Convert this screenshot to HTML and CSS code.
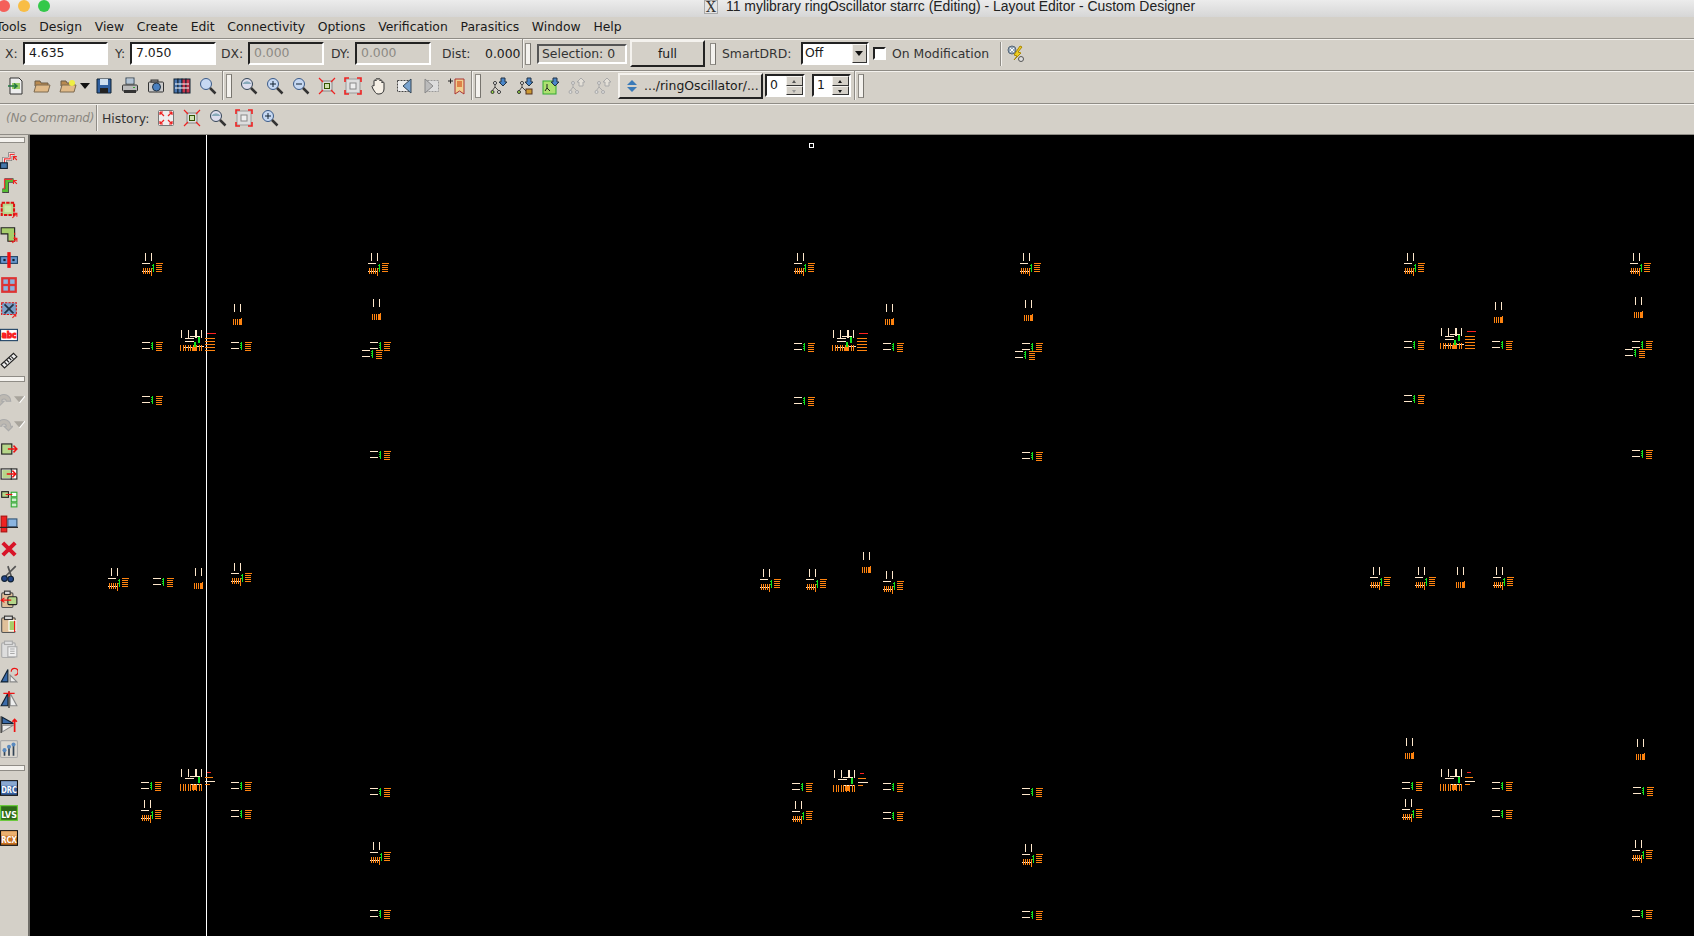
FILE: index.html
```html
<!DOCTYPE html>
<html lang="en">
<head>
<meta charset="utf-8">
<title>11 mylibrary ringOscillator starrc (Editing) - Layout Editor - Custom Designer</title>
<link rel="stylesheet" href="styles.css">
</head>
<body>
<svg class="defs" width="0" height="0" aria-hidden="true">
<defs>
<symbol id="i-open" viewBox="0 0 18 18"><path d="M3 1h9l3 3v13H3z" fill="#eee" stroke="#333"/><rect x="5" y="6" width="8" height="6" fill="#9c6"/><path d="M1 9h8M7 6.500 10 9l-3 2.500" stroke="#274" stroke-width="1.500" fill="none"/></symbol>
<symbol id="i-folder" viewBox="0 0 18 18"><path d="M2 4h5l1 2h7v3H2z" fill="#b98a50" stroke="#6b5a45"/><path d="M1 15 3 8h14l-2 7z" fill="#e0ba88" stroke="#7d6a50"/></symbol>
<symbol id="i-folder2" viewBox="0 0 18 18"><path d="M2 4h5l1 2h7v3H2z" fill="#b98a50" stroke="#6b5a45"/><path d="M1 15 3 8h14l-2 7z" fill="#e0ba88" stroke="#7d6a50"/><circle cx="13" cy="6" r="3" fill="#ee4"/></symbol>
<symbol id="i-save" viewBox="0 0 18 18"><path d="M2 2h14v14H2z" fill="#2f5f9f" stroke="#123"/><rect x="5" y="2" width="8" height="6" fill="#cfe0f0"/><rect x="5" y="11" width="8" height="5" fill="#222"/></symbol>
<symbol id="i-print" viewBox="0 0 18 18"><rect x="5" y="1" width="8" height="6" fill="#fff" stroke="#345"/><path d="M5 3h8M5 5h8" stroke="#68a"/><rect x="1.500" y="8" width="15" height="6" rx="1" fill="#bbb" stroke="#333"/><rect x="3" y="13" width="12" height="3" fill="#333"/><rect x="12" y="10" width="2" height="1" fill="#3a3"/></symbol>
<symbol id="i-cam" viewBox="0 0 18 18"><rect x="1.500" y="5" width="15" height="10" rx="1" fill="#ccc" stroke="#333"/><rect x="4" y="3" width="7" height="2" fill="#999" stroke="#333"/><circle cx="9.500" cy="10" r="4" fill="#4a80c0" stroke="#234"/></symbol>
<symbol id="i-lib" viewBox="0 0 18 18"><rect x="1" y="2" width="4" height="14" fill="#4a76b0" stroke="#123"/><rect x="5" y="2" width="4" height="14" fill="#4a76b0" stroke="#123"/><rect x="9" y="2" width="4" height="14" fill="#c8344a" stroke="#123"/><rect x="13" y="2" width="4" height="14" fill="#c8344a" stroke="#123"/><path d="M2 7h14M2 11h14" stroke="#fff"/></symbol>
<symbol id="i-mag" viewBox="0 0 18 18"><circle cx="7" cy="7" r="5.500" fill="#c6d8f2" stroke="#3a5a88"/><path d="M11 11l5.500 5.500" stroke="#333" stroke-width="2.500"/></symbol>
<symbol id="i-magfit" viewBox="0 0 18 18"><circle cx="7" cy="7" r="5.500" fill="#dde" stroke="#345"/><path d="M2.500 7a5 5 0 0 1 9 0z" fill="#8ab"/><path d="M11 11l5.500 5.500" stroke="#333" stroke-width="2.500"/></symbol>
<symbol id="i-plus" viewBox="0 0 18 18"><circle cx="7" cy="7" r="5.500" fill="#c6d8f2" stroke="#3a5a88"/><path d="M4 7h6M7 4v6" stroke="#123"/><path d="M11 11l5.500 5.500" stroke="#333" stroke-width="2.500"/></symbol>
<symbol id="i-minus" viewBox="0 0 18 18"><circle cx="7" cy="7" r="5.500" fill="#c6d8f2" stroke="#3a5a88"/><path d="M4 7h6" stroke="#123"/><path d="M11 11l5.500 5.500" stroke="#333" stroke-width="2.500"/></symbol>
<symbol id="i-fit" viewBox="0 0 18 18"><rect x="4" y="4" width="10" height="10" fill="#ddd" stroke="#888"/><rect x="6.500" y="6.500" width="5" height="5" fill="#cfe0b0" stroke="#350"/><path d="M1 1l4 4M17 1l-4 4M1 17l4-4M17 17l-4-4" stroke="#e22" stroke-width="1.200"/></symbol>
<symbol id="i-fit2" viewBox="0 0 18 18"><rect x="2" y="2" width="14" height="14" fill="#ddd" stroke="#999"/><rect x="6" y="6" width="6" height="6" fill="#eee" stroke="#888"/><path d="M1 5V1h4M13 1h4v4M1 13v4h4M17 13v4h-4" stroke="#e22" stroke-width="1.600" fill="none"/></symbol>
<symbol id="i-fit3" viewBox="0 0 18 18"><rect x="1.500" y="1.500" width="15" height="15" rx="1" fill="#eee" stroke="#777"/><path d="M3 3l4 4M3 3v3M3 3h3M15 3l-4 4M15 3v3M15 3h-3M3 15l4-4M3 15v-3M3 15h3M15 15l-4-4M15 15v-3M15 15h-3" stroke="#e22" stroke-width="1.200" fill="none"/></symbol>
<symbol id="i-hand" viewBox="0 0 18 18"><path d="M4 9V4a1 1 0 0 1 2 0V2.500a1 1 0 0 1 2 0a1 1 0 0 1 2 0V4a1 1 0 0 1 2 0v2a1 1 0 0 1 2 0v6c0 3-2 5-5 5H8c-2 0-3-2-5-5L2 9.500c0-1 1.500-1 2-.500z" fill="#f6f0e6" stroke="#333"/></symbol>
<symbol id="i-prev" viewBox="0 0 18 18"><rect x="1.500" y="3.500" width="11" height="11" fill="#eee" stroke="#444" stroke-dasharray="2 1"/><path d="M15 2v14L7 9z" fill="#7aa4d0" stroke="#345"/></symbol>
<symbol id="i-next" viewBox="0 0 18 18"><rect x="5.500" y="3.500" width="11" height="11" fill="#ddd" stroke="#999" stroke-dasharray="2 1"/><path d="M3 2v14l8-7z" fill="#bbb" stroke="#888"/></symbol>
<symbol id="i-book" viewBox="0 0 18 18"><path d="M0 4h5M2.500 1.500v5" stroke="#222"/><path d="M7 2h9v15l-4.500-3L7 17z" fill="#f0d090" stroke="#a33"/><path d="M9 5h5M9 7h5M9 9h5" stroke="#c30"/></symbol>
<symbol id="i-h1" viewBox="0 0 18 18"><path d="M5 6v4M2 14l3-4 4 4" stroke="#444" fill="none"/><circle cx="5" cy="6" r="1.500" fill="#fff" stroke="#333"/><circle cx="2.500" cy="15" r="1.500" fill="#9d4" stroke="#333"/><circle cx="9" cy="15" r="1.500" fill="#fff" stroke="#333"/><path d="M11 1h4v4h2l-4 4-4-4h2z" fill="#4a86c8" stroke="#234"/></symbol>
<symbol id="i-h2" viewBox="0 0 18 18"><path d="M6 6v4M3 14l3-4 4 4" stroke="#444" fill="none"/><circle cx="6" cy="6" r="1.500" fill="#fff" stroke="#333"/><circle cx="3" cy="15" r="1.500" fill="#9d4" stroke="#333"/><rect x="10" y="12" width="6" height="5" fill="#c93" stroke="#532"/><path d="M11 1h4v4h2l-4 4-4-4h2z" fill="#4a86c8" stroke="#234"/></symbol>
<symbol id="i-h3" viewBox="0 0 18 18"><rect x="1" y="4" width="13" height="13" fill="#ade070" stroke="#3a3"/><path d="M5 7v4M3 14l2-3 3 3" stroke="#222" fill="none"/><path d="M11 1h4v4h2l-4 4-4-4h2z" fill="#4a86c8" stroke="#234"/></symbol>
<symbol id="i-up" viewBox="0 0 18 18"><path d="M5 6v4M2 14l3-4 4 4" stroke="#aaa" fill="none"/><circle cx="5" cy="6" r="1.500" fill="#ddd" stroke="#aaa"/><circle cx="2.500" cy="15" r="1.500" fill="#ddd" stroke="#aaa"/><circle cx="9" cy="15" r="1.500" fill="#ddd" stroke="#aaa"/><path d="M11 9V5H9l4-4 4 4h-2v4z" fill="#e4e0d8" stroke="#aaa"/></symbol>
<symbol id="i-wand" viewBox="0 0 18 18"><circle cx="5" cy="5" r="4" fill="#9ab" stroke="#567"/><path d="M3 3l4 4M7 3l-4 4" stroke="#fff"/><path d="M13 1l-6 9 3 1-3 4 7-7-3-1 4-5z" fill="#ec2" stroke="#a80"/><circle cx="14" cy="14" r="2.500" fill="#ddd" stroke="#555"/></symbol>
<symbol id="s-p1" viewBox="0 0 16 16"><path d="M4 14V7h5V3h4" fill="none" stroke="#555" stroke-width="3.500"/><path d="M4 14V7h5V3h4" fill="none" stroke="#fff" stroke-width="2.500"/><path d="M4 14V7h5V3h4" fill="none" stroke="#e33"/><rect x="0.500" y="10.500" width="6" height="5" fill="#47a" stroke="#123"/><path d="M12 5l3 3M12 8V5h3" stroke="#e22" fill="none"/></symbol>
<symbol id="s-p2" viewBox="0 0 16 16"><path d="M2 13h4V4h6" fill="none" stroke="#444" stroke-width="4"/><path d="M2 13h4V4h6" fill="none" stroke="#5b3" stroke-width="2.500"/><path d="M3 11h1V3h7" fill="none" stroke="#e33"/><path d="M12 4l3 3M12 7V4h3" stroke="#e22" fill="none"/></symbol>
<symbol id="s-rect" viewBox="0 0 16 16"><rect x="1.500" y="1.500" width="11" height="11" fill="#b6d68a" stroke="#d11" stroke-width="1.800" stroke-dasharray="3 1"/><rect x="4" y="4" width="6" height="6" fill="#cde6a8"/><path d="M11 15l4-4M12 11h3v3" stroke="#e22" fill="none"/></symbol>
<symbol id="s-poly" viewBox="0 0 16 16"><path d="M1 1.500h12v12H7V7H1z" fill="#a6ce6a" stroke="#222"/><path d="M13 6v7.500H8" fill="none" stroke="#d11" stroke-dasharray="2 1"/><path d="M11 15l4-4M12 11h3v3" stroke="#e22" fill="none"/></symbol>
<symbol id="s-via" viewBox="0 0 16 16"><rect x="0.500" y="5" width="15" height="6" fill="#6a9ad0" stroke="#246"/><rect x="3" y="7" width="2" height="2" fill="#123"/><rect x="11" y="7" width="2" height="2" fill="#123"/><rect x="6.500" y="1" width="3" height="14" fill="#e11"/></symbol>
<symbol id="s-grid" viewBox="0 0 16 16"><rect x="1" y="1" width="14" height="14" fill="#d33"/><rect x="3" y="3" width="4" height="4" fill="#8ab4e0"/><rect x="9" y="3" width="4" height="4" fill="#8ab4e0"/><rect x="3" y="9" width="4" height="4" fill="#8ab4e0"/><rect x="9" y="9" width="4" height="4" fill="#8ab4e0"/></symbol>
<symbol id="s-x" viewBox="0 0 16 16"><rect x="1.500" y="1.500" width="13" height="10.500" fill="#7aa0c8" stroke="#d11" stroke-dasharray="2 1"/><path d="M4 3l8 8M12 3l-8 8" stroke="#234" stroke-width="1.500"/><path d="M11 15l3-3M12 12h2v2" stroke="#e22" fill="none"/></symbol>
<symbol id="s-abc" viewBox="0 0 16 16"><rect x="0.500" y="3" width="15" height="10" fill="#fff" stroke="#246"/><text x="8" y="11" text-anchor="middle" textLength="13" lengthAdjust="spacingAndGlyphs" class="icon-text red">abc</text></symbol>
<symbol id="s-rule" viewBox="0 0 16 16"><path d="M1 12 12 2l3 3L4 15z" fill="#eee" stroke="#222"/><path d="M4 10l2 2M6 8l2 2M8 6l2 2M10 5l2 2" stroke="#222"/></symbol>
<symbol id="s-undo" viewBox="0 0 16 16"><path d="M2 10a6 6 0 0 1 12 0h-4a2 2 0 0 0-4 0h2l-4 4-4-4z" fill="#bdb9b2" stroke="#aaa"/></symbol>
<symbol id="s-redo" viewBox="0 0 16 16"><path d="M14 10a6 6 0 0 0-12 0h4a2 2 0 0 1 4 0H8l4 4 4-4z" fill="#bdb9b2" stroke="#aaa"/></symbol>
<symbol id="s-down" viewBox="0 0 10 10"><path d="M0 2h10L5 8z" fill="#a8a49c"/><path d="M10 2 5 8" stroke="#fff"/></symbol>
<symbol id="s-mv1" viewBox="0 0 16 16"><rect x="1.500" y="3.500" width="9" height="9" fill="#b6d68a" stroke="#222"/><path d="M7 8h8M12 5l3 3-3 3" stroke="#e11" fill="none" stroke-width="1.300"/></symbol>
<symbol id="s-mv2" viewBox="0 0 16 16"><rect x="1" y="3.500" width="14" height="9" fill="#fff" stroke="#222"/><rect x="2" y="4.500" width="7" height="7" fill="#b6d68a"/><path d="M10 3v10" stroke="#222"/><path d="M6 8h8M11 5l3 3-3 3" stroke="#e11" fill="none" stroke-width="1.300"/></symbol>
<symbol id="s-mv3" viewBox="0 0 16 16"><rect x="1.500" y="1.500" width="6" height="5" fill="#b6d68a" stroke="#222"/><rect x="10" y="2" width="5" height="4" fill="#fff" stroke="#3a3"/><rect x="10" y="7" width="5" height="3.500" fill="#cec" stroke="#3a3"/><rect x="10" y="11.500" width="5" height="3.500" fill="#cec" stroke="#3a3"/><path d="M5 4h6" stroke="#e11"/></symbol>
<symbol id="s-align" viewBox="0 0 16 16"><rect x="1" y="1" width="5" height="14" fill="#e22" stroke="#a11"/><rect x="7" y="3.500" width="8" height="7" fill="#8ab4e0" stroke="#357"/><path d="M0 11h16" stroke="#222"/></symbol>
<symbol id="s-del" viewBox="0 0 16 16"><path d="M2.500 2.500l11 11M13.500 2.500l-11 11" stroke="#d81428" stroke-width="3.500"/></symbol>
<symbol id="s-cut" viewBox="0 0 16 16"><path d="M5 10 14 1M10 10 7 1" stroke="#555" stroke-width="1.500"/><circle cx="4" cy="12" r="2.500" fill="#248" stroke="#123"/><circle cx="9.500" cy="12.500" r="2.500" fill="#248" stroke="#123"/></symbol>
<symbol id="s-c1" viewBox="0 0 16 16"><rect x="1.500" y="2.500" width="10" height="13" rx="1" fill="#e0c09a" stroke="#555"/><rect x="4" y="1" width="5" height="3" fill="#ddd" stroke="#333"/><rect x="7" y="6" width="8" height="7" rx="1" fill="#b6d68a" stroke="#222"/><path d="M1 9h9M4 7 1 9l3 2" stroke="#e11" fill="none"/></symbol>
<symbol id="s-c2" viewBox="0 0 16 16"><rect x="1.500" y="2.500" width="12" height="13" rx="1" fill="#e0c09a" stroke="#555"/><rect x="4" y="1" width="7" height="3" fill="#ddd" stroke="#333"/><rect x="8" y="5" width="6" height="9" fill="#a6ce6a" stroke="#fff"/><path d="M13 5v10" stroke="#e11"/></symbol>
<symbol id="s-c3" viewBox="0 0 16 16"><rect x="1.500" y="2.500" width="12" height="13" rx="1" fill="#ddd" stroke="#aaa"/><rect x="4" y="1" width="7" height="3" fill="#ddd" stroke="#aaa"/><rect x="7" y="6" width="8" height="9" fill="#eee" stroke="#aaa"/><path d="M9 8h4M9 10h4M9 12h4" stroke="#aaa"/></symbol>
<symbol id="s-t1" viewBox="0 0 16 16"><path d="M7 4v11H1z" fill="#3a6aa8" stroke="#123"/><path d="M9 9v6h6z" fill="#eee" stroke="#888"/><path d="M10 6a3 3 0 1 1 3 3" fill="none" stroke="#e11"/></symbol>
<symbol id="s-t2" viewBox="0 0 16 16"><path d="M7 3v11H1z" fill="#3a6aa8" stroke="#123"/><path d="M9 3v11h6z" fill="#eee" stroke="#888"/><path d="M8 1v15" stroke="#222"/><path d="M3 3h10M8 1v5" stroke="#e11" stroke-width="1.300"/></symbol>
<symbol id="s-t3" viewBox="0 0 16 16"><path d="M2 2l10 5.500H2z" fill="#3a6aa8" stroke="#123"/><path d="M2 9h10L2 15z" fill="#eee" stroke="#888"/><path d="M1 1v15" stroke="#222"/><path d="M13 15V4M11 6l2-2 2 2" stroke="#e11" stroke-width="1.500" fill="none"/></symbol>
<symbol id="s-sl" viewBox="0 0 16 16"><rect x="0.500" y="0.500" width="15" height="15" rx="1" fill="#dcd8d0" stroke="#aaa"/><path d="M4 14V8M8 14V5M12 14V3" stroke="#345" stroke-width="1.500"/><circle cx="4" cy="9" r="1.800" fill="#5a8ac0"/><circle cx="8" cy="6" r="1.800" fill="#5a8ac0"/><circle cx="12" cy="4" r="1.800" fill="#5a8ac0"/></symbol>
<symbol id="s-drc" viewBox="0 0 16 14"><rect x="0.500" y="0.500" width="15" height="13" fill="#3a62a0" stroke="#111"/><rect x="1" y="1" width="14" height="4" fill="#8aa8d0"/><text x="8" y="11" text-anchor="middle" textLength="14" lengthAdjust="spacingAndGlyphs" class="icon-text">DRC</text></symbol>
<symbol id="s-lvs" viewBox="0 0 16 14"><rect x="0.500" y="0.500" width="15" height="13" fill="#2e6a18" stroke="#6c3"/><text x="8" y="11" text-anchor="middle" textLength="14" lengthAdjust="spacingAndGlyphs" class="icon-text">LVS</text></symbol>
<symbol id="s-rcx" viewBox="0 0 16 14"><rect x="0.500" y="0.500" width="15" height="13" fill="#c87020" stroke="#111"/><rect x="1" y="1" width="14" height="4" fill="#eab070"/><text x="8" y="11" text-anchor="middle" textLength="14" lengthAdjust="spacingAndGlyphs" class="icon-text">RCX</text></symbol>

<g id="m-a">
<path class="cream" d="M-6.500-10.500v8M-.5-10.500v8M-10.500 .5h8M-10.500 8h9"/>
<path class="green" d="M1 .5v8M0 2.500h2M-1 5h3"/>
<path class="orange" d="M-8.500 4.500v6M-6.500 4.500v6M-4.500 4.500v6M-2.500 4.500v6M-.5 4.500v8M3.500 .5h7M3.500 2.500h6M3.500 4.500h6M3.500 6.500h6M3.500 8.500h6"/>
</g>
<g id="m-b">
<path class="cream" d="M-10.500-3.500h8M-10.500 2.500h8"/>
<path class="green" d="M.5-4.500v8M-1-2.500h1.500M-1-.5h1.500M-1 1.500h1.500"/>
<path class="orange" d="M3.500-3.500h7M3.500-1.500h6M3.500 .5h6M3.500 2.500h6M3.500 4.500h6"/>
</g>
<g id="m-c">
<path class="cream" d="M-2.500-10.500v8M3.500-10.500v8"/>
<path class="orange" d="M-3.500 4.500v6M-1.500 4.500v6M.5 4.500v6M2.500 4.500v6M4.500 3.500v7M3.500 4.500v6"/>
</g>
<g id="m-d">
<path class="cream" d="M-16.500-12v8M-9.500-12v8M-2.500-12v8M-1.500-12v8M3.500-12v8M-13-3.500h9M-8-5.500h10M-13-.5h9M-14 5.500h9M-1 4.500h7M7 -.5h10"/>
<path class="green thick" d="M1-5v6M-3 0v7"/>
<path class="orange" d="M-17.500 3v6M-15 3v6M-12.500 3v6M-10 3v6M-8 3v6M-5 3v6M-2 3v6M1 3v6M3.500 3v6M7-3.500h10M7-.5h10M7 2.500h10M7 5.500h10M7 8.500h10"/>
<rect class="fill-o" x="-6" y="5" width="4" height="4"/>
<path class="red" d="M9-9h9"/>
</g>
<g id="m-e">
<path class="cream" d="M-16.500-12v8M-9.500-12v8M-2.500-12v8M-1.500-12v8M3.500-12v8M-13-2.500h9M-8-4.500h10M-7 3.500h10M7 .5h10"/>
<path class="green thick" d="M1-4v6"/>
<path class="orange" d="M-17.500 3v7M-15 3v7M-12.500 3v7M-10 3v7M-8 3v7M-5 3v7M-2 3v7M1 3v7M3.500 3v7M7-3.500h8M7 3.500h5"/>
<rect class="fill-o" x="-6" y="4" width="4" height="5"/>
<path class="red" d="M9-9h4"/>
</g>
</defs>
</svg>

<div class="app">
  <header class="title">
    <div class="lights"><i class="dot red-dot"></i><i class="dot yellow-dot"></i><i class="dot green-dot"></i></div>
    <div class="title-text"><span class="x-box">X</span>11 mylibrary ringOscillator starrc (Editing) - Layout Editor - Custom Designer</div>
  </header>
  <nav class="menu">
    <span class="cut">Tools</span><span>Design</span><span>View</span><span>Create</span><span>Edit</span><span>Connectivity</span><span>Options</span><span>Verification</span><span>Parasitics</span><span>Window</span><span>Help</span>
  </nav>

  <div class="bar bar1">
    <label class="lab l-x">X:</label><div class="field w85">4.635</div>
    <label class="lab l-y">Y:</label><div class="field w86">7.050</div>
    <label class="lab l-dx">DX:</label><div class="field w76 off">0.000</div>
    <label class="lab l-dy">DY:</label><div class="field w76 off">0.000</div>
    <label class="lab l-dist">Dist:</label><span class="num">0.000</span>
    <div class="sep s1"></div><div class="grip"></div>
    <div class="selbox">Selection: 0</div>
    <button class="btn full">full</button>
    <div class="grip g2"></div>
    <label class="lab l-sd">SmartDRD:</label>
    <div class="combo"><span>Off</span><b class="arrow"></b></div>
    <div class="check"></div><label class="lab l-on">On Modification</label>
    <div class="sep s2"></div>
    <svg class="ic wand"><use href="#i-wand"/></svg>
  </div>

  <div class="bar bar2">
    <svg class="ic first"><use href="#i-open"/></svg>
    <svg class="ic"><use href="#i-folder"/></svg>
    <svg class="ic"><use href="#i-folder2"/></svg><b class="drop"></b>
    <svg class="ic t1"><use href="#i-save"/></svg>
    <svg class="ic"><use href="#i-print"/></svg>
    <svg class="ic"><use href="#i-cam"/></svg>
    <svg class="ic"><use href="#i-lib"/></svg>
    <svg class="ic"><use href="#i-mag"/></svg>
    <div class="sep s3"></div><div class="grip"></div>
    <svg class="ic t2"><use href="#i-magfit"/></svg>
    <svg class="ic"><use href="#i-plus"/></svg>
    <svg class="ic"><use href="#i-minus"/></svg>
    <svg class="ic"><use href="#i-fit"/></svg>
    <svg class="ic"><use href="#i-fit2"/></svg>
    <svg class="ic"><use href="#i-hand"/></svg>
    <svg class="ic"><use href="#i-prev"/></svg>
    <svg class="ic"><use href="#i-next"/></svg>
    <svg class="ic"><use href="#i-book"/></svg>
    <div class="sep s3"></div><div class="grip"></div>
    <svg class="ic t3"><use href="#i-h1"/></svg>
    <svg class="ic"><use href="#i-h2"/></svg>
    <svg class="ic"><use href="#i-h3"/></svg>
    <svg class="ic"><use href="#i-up"/></svg>
    <svg class="ic"><use href="#i-up"/></svg>
    <button class="btn path"><span class="updown"><i></i><i></i></span>.../ringOscillator/...</button>
    <div class="spin"><span>0</span><div class="spin-b"><i class="u dim"></i><i class="d dim"></i></div></div>
    <div class="spin s2nd"><span>1</span><div class="spin-b"><i class="u"></i><i class="d"></i></div></div>
    <div class="sep s5"></div><div class="grip"></div>
  </div>

  <div class="bar bar3">
    <span class="cmd">(No Command)</span>
    <div class="sep s4"></div>
    <label class="lab hist">History:</label>
    <svg class="ic h1"><use href="#i-fit3"/></svg>
    <svg class="ic"><use href="#i-fit"/></svg>
    <svg class="ic"><use href="#i-magfit"/></svg>
    <svg class="ic"><use href="#i-fit2"/></svg>
    <svg class="ic"><use href="#i-plus"/></svg>
  </div>

  <main class="work">
    <aside class="side">
      <div class="grip-h"></div>
      <div class="tools">
        <svg class="st"><use href="#s-p1"/></svg>
        <svg class="st"><use href="#s-p2"/></svg>
        <svg class="st"><use href="#s-rect"/></svg>
        <svg class="st"><use href="#s-poly"/></svg>
        <svg class="st"><use href="#s-via"/></svg>
        <svg class="st"><use href="#s-grid"/></svg>
        <svg class="st"><use href="#s-x"/></svg>
        <svg class="st"><use href="#s-abc"/></svg>
        <svg class="st"><use href="#s-rule"/></svg>
      </div>
      <div class="grip-h"></div>
      <div class="tools">
        <div class="st-row"><svg class="st"><use href="#s-undo"/></svg><svg class="mini"><use href="#s-down"/></svg></div>
        <div class="st-row"><svg class="st"><use href="#s-redo"/></svg><svg class="mini"><use href="#s-down"/></svg></div>
        <svg class="st"><use href="#s-mv1"/></svg>
        <svg class="st"><use href="#s-mv2"/></svg>
        <svg class="st"><use href="#s-mv3"/></svg>
        <svg class="st"><use href="#s-align"/></svg>
        <svg class="st"><use href="#s-del"/></svg>
        <svg class="st"><use href="#s-cut"/></svg>
        <svg class="st"><use href="#s-c1"/></svg>
        <svg class="st"><use href="#s-c2"/></svg>
        <svg class="st"><use href="#s-c3"/></svg>
        <svg class="st"><use href="#s-t1"/></svg>
        <svg class="st"><use href="#s-t2"/></svg>
        <svg class="st"><use href="#s-t3"/></svg>
        <svg class="st"><use href="#s-sl"/></svg>
      </div>
      <div class="grip-h"></div>
      <div class="tools">
        <svg class="st"><use href="#s-drc"/></svg>
        <svg class="st"><use href="#s-lvs"/></svg>
        <svg class="st"><use href="#s-rcx"/></svg>
      </div>
    </aside>
    <svg class="canvas" viewBox="30 135 1664 801" preserveAspectRatio="xMinYMin slice">
      <rect x="809.500" y="143.500" width="4" height="4" class="marker"/>
      <path class="crosshair" d="M206.500 135v801"/>
      <use href="#m-a" x="152" y="263"/><use href="#m-a" x="378" y="263"/>
      <use href="#m-c" x="237" y="314"/><use href="#m-c" x="376" y="309"/>
      <use href="#m-b" x="152" y="346"/><use href="#m-d" x="198" y="342"/><use href="#m-b" x="241" y="346"/><use href="#m-b" x="380" y="346"/><use href="#m-b" x="372" y="354"/>
      <use href="#m-b" x="152" y="400"/><use href="#m-b" x="380" y="455"/>
      <use href="#m-a" x="118" y="578"/><use href="#m-b" x="163" y="582"/><use href="#m-c" x="198" y="578"/><use href="#m-a" x="241" y="573"/>
      <use href="#m-b" x="151" y="786"/><use href="#m-e" x="198" y="781"/><use href="#m-b" x="241" y="786"/><use href="#m-b" x="380" y="792"/>
      <use href="#m-a" x="151" y="810"/><use href="#m-b" x="241" y="814"/>
      <use href="#m-a" x="380" y="852"/><use href="#m-b" x="380" y="914"/>

      <use href="#m-a" x="804" y="263"/><use href="#m-a" x="1030" y="263"/>
      <use href="#m-c" x="889" y="314"/><use href="#m-c" x="1028" y="310"/>
      <use href="#m-b" x="804" y="347"/><use href="#m-d" x="850" y="342"/><use href="#m-b" x="893" y="347"/><use href="#m-b" x="1032" y="347"/><use href="#m-b" x="1025" y="355"/>
      <use href="#m-b" x="804" y="401"/><use href="#m-b" x="1032" y="456"/>
      <use href="#m-a" x="770" y="579"/><use href="#m-a" x="816" y="579"/><use href="#m-c" x="866" y="562"/><use href="#m-a" x="893" y="581"/>
      <use href="#m-b" x="802" y="787"/><use href="#m-e" x="851" y="782"/><use href="#m-b" x="893" y="787"/><use href="#m-b" x="1032" y="792"/>
      <use href="#m-a" x="802" y="811"/><use href="#m-b" x="893" y="816"/>
      <use href="#m-a" x="1032" y="854"/><use href="#m-b" x="1032" y="915"/>

      <use href="#m-a" x="1414" y="263"/><use href="#m-a" x="1640" y="263"/>
      <use href="#m-c" x="1498" y="312"/><use href="#m-c" x="1638" y="307"/>
      <use href="#m-b" x="1414" y="345"/><use href="#m-d" x="1458" y="340"/><use href="#m-b" x="1502" y="345"/><use href="#m-b" x="1642" y="345"/><use href="#m-b" x="1635" y="353"/>
      <use href="#m-b" x="1414" y="399"/><use href="#m-b" x="1642" y="454"/>
      <use href="#m-a" x="1380" y="577"/><use href="#m-a" x="1425" y="577"/><use href="#m-c" x="1460" y="577"/><use href="#m-a" x="1503" y="577"/>
      <use href="#m-c" x="1409" y="748"/><use href="#m-c" x="1640" y="749"/>
      <use href="#m-b" x="1412" y="786"/><use href="#m-e" x="1458" y="781"/><use href="#m-b" x="1502" y="786"/><use href="#m-b" x="1643" y="791"/>
      <use href="#m-a" x="1412" y="809"/><use href="#m-b" x="1502" y="814"/>
      <use href="#m-a" x="1642" y="850"/><use href="#m-b" x="1642" y="914"/>
    </svg>
  </main>
</div>
</body>
</html>
```
FILE: styles.css
```css
* { box-sizing: border-box; }
html, body { margin: 0; height: 100%; overflow: hidden; }
body { background: #d4d0c8; font-family: "DejaVu Sans", sans-serif; font-size: 12.4px; color: #1a1a1a; }
.defs { position: absolute; }
.app { display: flex; flex-direction: column; height: 936px; width: 1694px; overflow: hidden; }

.title { height: 17px; flex: none; display: flex; background: linear-gradient(#ececec, #d6d6d6); }
.lights { display: flex; gap: 8px; margin-left: -2px; }
.dot { width: 12px; height: 12px; border-radius: 50%; display: block; }
.red-dot { background: #f4605a; }
.yellow-dot { background: #f8bd45; }
.green-dot { background: #34c84a; }
.title-text { margin-left: 654px; font-family: "Liberation Sans", sans-serif; font-size: 13.95px; line-height: 15px; color: #222; display: flex; align-items: center; white-space: pre; height: 15px; margin-top: -1px; }
.x-box { width: 14px; height: 14px; background: #e4e4e4; border: 1px solid #aaa; font: 14px/12px "DejaVu Serif", serif; text-align: center; margin-right: 8px; color: #333; overflow: hidden; }

.menu { height: 21px; flex: none; display: flex; align-items: center; padding-bottom: 2px; }
.menu span { display: block; margin-right: 12.700px; white-space: nowrap; }
.menu .cut { margin-left: -4px; }

.bar { flex: none; display: flex; align-items: center; border-top: 1px solid #8f8c86; box-shadow: inset 0 1px 0 #f4f2ee; }
.bar1 { height: 32px; padding: 0 0 2px 5px; }
.bar2 { height: 33px; padding: 0 0 3px 7px; }
.bar3 { height: 32px; padding: 0 0 2px 6px; border-bottom: 1px solid #8f8c86; }

.lab { white-space: nowrap; color: #333; flex: none; display: block; }
.field { height: 23px; border: 2px solid; border-color: #222 #fff #fff #222; background: #fff; padding: 1px 0 0 4px; line-height: 16px; flex: none; }
.field.off { background: #d4d0c8; color: #8c8a84; }
.w85 { width: 85px; }
.w86 { width: 86px; }
.w76 { width: 76px; }
.l-x { width: 18px; }
.l-y { margin-left: 7px; width: 15px; }
.l-dx { margin-left: 5px; width: 27px; }
.l-dy { margin-left: 7px; width: 24px; }
.l-dist { margin-left: 11px; width: 43px; }
.num { width: 35px; flex: none; }
.sep { width: 2px; align-self: stretch; border-left: 1px solid #8f8c86; border-right: 1px solid #f4f2ee; flex: none; }
.s1 { margin-left: 2px; }
.grip { width: 6px; height: 22px; border: 1px solid #8f8c86; border-right-color: #77746e; background: #f4f2ee; margin-left: 1px; flex: none; }
.g2 { margin-left: 5px; }
.selbox { margin-left: 6px; width: 90px; height: 20px; border: 2px solid; border-color: #555 #fff #fff #555; padding-left: 3px; line-height: 16px; white-space: nowrap; color: #333; flex: none; }
.btn { font: 12.4px "DejaVu Sans", sans-serif; color: #1a1a1a; background: #d4d0c8; border: 2px solid; border-color: #f4f2ee #222 #222 #f4f2ee; white-space: nowrap; padding: 0; flex: none; }
.full { width: 75px; height: 27px; margin-left: 3px; }
.l-sd { margin-left: 6px; width: 79px; }
.combo { width: 68px; height: 23px; background: #fff; border: 2px solid; border-color: #222 #fff #fff #222; display: flex; justify-content: space-between; padding-left: 2px; line-height: 17px; flex: none; }
.arrow { width: 15px; background: #d4d0c8; border: 1px solid; border-color: #f4f2ee #333 #333 #f4f2ee; position: relative; }
.arrow::after { content: ""; position: absolute; left: 2px; top: 6px; border: 4px solid transparent; border-top: 5px solid #111; }
.check { width: 13px; height: 13px; margin-left: 4px; background: #fff; border: 2px solid; border-color: #222 #fff #fff #222; flex: none; }
.l-on { margin-left: 6px; width: 98px; }
.s2 { margin-left: 10px; height: 24px; align-self: center; }
.ic { width: 18px; height: 18px; margin-left: 8px; flex: none; }
.wand { margin-left: 5px; }
.bar2 .first { margin-left: 0; }
.drop { border: 5px solid transparent; border-top: 6px solid #111; margin: 5px 0 0 3px; flex: none; }
.bar2 .t1 { margin-left: 5px; }
.s3 { margin-left: 5px; }
.bar2 .grip { margin-left: 2px; height: 24px; }
.bar2 .t2 { margin-left: 8px; }
.bar2 .t3 { margin-left: 9px; }
.path { width: 145px; height: 26px; margin-left: 6px; text-align: left; display: flex; align-items: center; }
.updown { width: 24px; display: flex; flex-direction: column; align-items: center; gap: 2px; flex: none; }
.updown i { display: block; border: 5px solid transparent; border-bottom: 5px solid #3a7ab8; border-top: 0; }
.updown i + i { border-bottom: 0; border-top: 5px solid #3a7ab8; }
.spin { width: 40px; height: 23px; margin-left: 2px; background: #fff; border: 2px solid; border-color: #222 #fff #fff #222; display: flex; justify-content: space-between; padding-left: 3px; line-height: 17px; flex: none; }
.s2nd { margin-left: 7px; width: 39px; }
.s5 { margin-left: 3px; }
.spin-b { width: 17px; display: flex; flex-direction: column; }
.spin-b i { flex: 1; background: #d4d0c8; border: 1px solid; border-color: #f4f2ee #333 #333 #f4f2ee; position: relative; }
.spin-b i::after { content: ""; position: absolute; left: 5px; top: 3px; border: 2px solid transparent; }
.spin-b .u::after { border-bottom: 3px solid #111; border-top: 0; }
.spin-b .d::after { border-top: 3px solid #111; border-bottom: 0; }
.spin-b .d.dim::after { border-top-color: #999; }
.spin-b .u.dim::after { border-bottom-color: #555; }

.cmd { font-style: italic; color: #8a8780; width: 86px; white-space: nowrap; font-size: 12px; letter-spacing: -.25px; flex: none; }
.s4 { margin-left: 4px; align-self: center; height: 26px; }
.hist { margin-left: 4px; width: 48px; }
.bar3 .h1 { margin-left: 7px; }

.work { flex: 1; display: flex; min-height: 0; }
.side { width: 30px; flex: none; border-right: 2px solid #6f6d68; display: flex; flex-direction: column; }
.grip-h { height: 6px; width: 25px; border: 1px solid #8f8c86; border-left: 0; background: #f4f2ee; flex: none; margin: 2px 0 0; }
.tools { display: flex; flex-direction: column; padding: 4.500px 0 1.500px; }
.st { width: 18px; height: 18px; display: block; margin: 3.500px 0; flex: none; }
.st-row { display: flex; align-items: center; margin-left: -5px; }
.mini { width: 11px; height: 11px; margin-left: 1px; }
.icon-text { font: bold 8px "DejaVu Sans", sans-serif; fill: #fff; }
.icon-text.red { fill: #b01020; }

.canvas { flex: 1; background: #000; display: block; height: 100%; shape-rendering: crispEdges; }
.canvas path { fill: none; stroke-width: 1; }
.cream { stroke: #ffe8cc; }
.green { stroke: #10e020; }
.thick { stroke-width: 2 !important; }
.orange { stroke: #ff8410; }
.red { stroke: #ff2020; }
.fill-o { fill: #ff8410; }
.crosshair { stroke: #fff; }
.marker { fill: #000; stroke: #fff; stroke-width: 1; }
```
